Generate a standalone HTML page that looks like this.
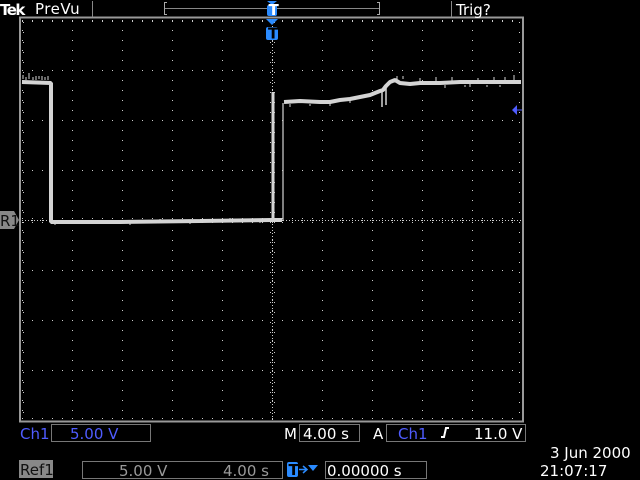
<!DOCTYPE html>
<html><head><style>
body{margin:0;background:#000;width:640px;height:480px;overflow:hidden}
svg{display:block}
text{font-family:"DejaVu Sans","Liberation Sans",sans-serif;font-size:15px}
</style></head><body>
<svg width="640" height="480" viewBox="0 0 640 480">
<defs>
<pattern id="dots" x="22" y="0" width="10" height="50" patternUnits="userSpaceOnUse"><rect x="0" y="20" width="1" height="1" fill="#ccc"/></pattern>
<pattern id="vdots" x="0" y="20" width="50" height="10" patternUnits="userSpaceOnUse"><rect x="22" y="0" width="1" height="1" fill="#ccc"/></pattern>
</defs>
<rect x="22" y="20" width="500" height="400" fill="url(#dots)"/>
<rect x="22" y="20" width="500" height="400" fill="url(#vdots)"/>
<line x1="22" y1="220.5" x2="522" y2="220.5" stroke="#ccc" stroke-dasharray="1 2"/>
<line x1="272.5" y1="20" x2="272.5" y2="420" stroke="#ccc" stroke-dasharray="1 2"/>
<g stroke="#ccc">
<path d="M22 218.5h500M22 222.5h500" stroke-dasharray="1 9" />
<path d="M270.5 22v400M274.5 22v400" stroke-dasharray="1 9"/>
<path d="M22 21.5h500M22 418.5h500" stroke-dasharray="1 9"/>
<path d="M23.5 22v400M519.5 22v400" stroke-dasharray="1 9"/>
</g>
<rect x="20" y="17.5" width="503" height="404" fill="none" stroke="#999" stroke-width="2"/>
<!-- trace -->
<g fill="none" stroke="#d4d4d4" stroke-linejoin="bevel">
<path stroke-width="4" d="M22 82 L51 83 L51 222 L120 222 L200 221 L272 220 L282 220"/>
<path stroke-width="1" d="M23 79v-4M26 80v-3M29 79v-6M33 80v-3M36 80v-4M39 79v-3M42 80v-4M45 80v-3M48 80v-4M55 223v2M65 224v-4M80 224v-3M100 223v-3M130 223v2M160 222v-3M190 222v2M230 221v-3M260 221v2"/>
<path d="M273 92 V220" stroke-width="3"/>
<path d="M283 220 V103" stroke-width="1.2"/>
<path stroke-width="4" d="M284 102 L300 101 L320 102 L330 102 L340 100 L350 99 L360 97 L370 95 L375 93 L380 91 L383 90 L386 86 L390 82 L395 80 L400 83 L410 84 L420 83 L440 83 L460 82 L480 82 L500 82 L521 82"/>
<path d="M382 91V107M386 88V105" stroke-width="1.5"/>
<path d="M436 82v-5M452 82v-5M494 83v-6M505 82v-5M514 82v-7M420 82v-4M478 82v-4M445 85v3M465 85v2M470 84v3M487 85v2M500 85v2M290 104v3M310 104v2M330 104v2M350 101v2M397 80v-4M403 79v-3" stroke-width="1"/>
</g>
<!-- R1 marker -->
<path d="M0 211 H14 L19 220 L14 229 H0Z" fill="#888"/>
<text x="0" y="226" fill="#111" font-size="12" font-family="Liberation Sans">R1</text>
<path d="M512 110 L517 105 V115Z M517 109.5 H522 V110.5 H517Z" fill="#4f5cff"/>
<!-- top bar -->
<text x="0" y="15" fill="#fff" font-weight="bold" font-size="18" letter-spacing="-1.5" font-family="Liberation Sans">Tek</text>
<text x="35" y="14" fill="#fff" font-size="16" letter-spacing="0.5">PreVu</text>
<line x1="92.5" y1="1" x2="92.5" y2="17" stroke="#888"/>
<path d="M167 2.5 H164.5 V14.5 H167 M377 2.5 H379.5 V14.5 H377" stroke="#aaa" fill="none"/>
<line x1="165" y1="8.5" x2="379" y2="8.5" stroke="#888"/>
<line x1="451.5" y1="1" x2="451.5" y2="17" stroke="#888"/>
<text x="456" y="15" fill="#fff" font-size="17">Trig?</text>
<path d="M267 1 H277 L272 5Z" fill="#2a8bff"/>
<rect x="267" y="5" width="10" height="11" rx="2" fill="#2a8bff"/>
<text x="268.5" y="15" fill="#fff" font-size="11" font-weight="bold">T</text>
<path d="M266 19 H278 L272 25Z" fill="#2a8bff"/>
<rect x="266" y="27" width="12" height="13" rx="2" fill="#2a8bff"/>
<text x="268" y="38.5" fill="#000" font-size="13" font-weight="bold">T</text>
<!-- bottom -->
<text x="20" y="439" fill="#4f5cff" font-size="16">Ch1</text>
<rect x="51.5" y="424.5" width="99" height="17" fill="none" stroke="#777"/>
<text x="70" y="439" fill="#4f5cff" font-size="16">5.00 V</text>
<text x="284" y="439" fill="#fff" font-size="16">M</text>
<rect x="299.5" y="424.5" width="60" height="17" fill="none" stroke="#777"/>
<text x="303" y="439" fill="#fff" font-size="16">4.00 s</text>
<text x="373" y="439" fill="#fff" font-size="16">A</text>
<rect x="386.5" y="424.5" width="139" height="17" fill="none" stroke="#777"/>
<text x="398" y="439" fill="#4f5cff" font-size="16">Ch1</text>
<path d="M441 437 H444 L446 428 H449" stroke="#fff" stroke-width="2" fill="none"/>
<text x="474" y="439" fill="#fff" font-size="16">11.0 V</text>
<text x="550" y="458" fill="#fff" font-size="16">3 Jun  2000</text>
<text x="540" y="476" fill="#fff" font-size="16">21:07:17</text>
<rect x="19" y="460" width="34" height="18" fill="#888"/>
<text x="20" y="475" fill="#111" font-size="15">Ref1</text>
<rect x="82.5" y="461.5" width="200" height="17" fill="none" stroke="#777"/>
<text x="119" y="476" fill="#999" font-size="16">5.00 V</text>
<text x="223" y="476" fill="#999" font-size="16">4.00 s</text>
<rect x="287" y="462" width="11" height="15" rx="2" fill="#2a8bff"/>
<text x="288.5" y="475" fill="#000" font-size="13" font-weight="bold">T</text>
<path d="M299 469.5 H306 M303 466 L307 469.5 L303 473" stroke="#2a8bff" stroke-width="1.5" fill="none"/>
<path d="M308 465 H318 L313 471Z" fill="#2a8bff"/>
<rect x="325.5" y="461.5" width="101" height="17" fill="none" stroke="#777"/>
<text x="327" y="476" fill="#fff" font-size="16">0.00000 s</text>
</svg>
</body></html>
